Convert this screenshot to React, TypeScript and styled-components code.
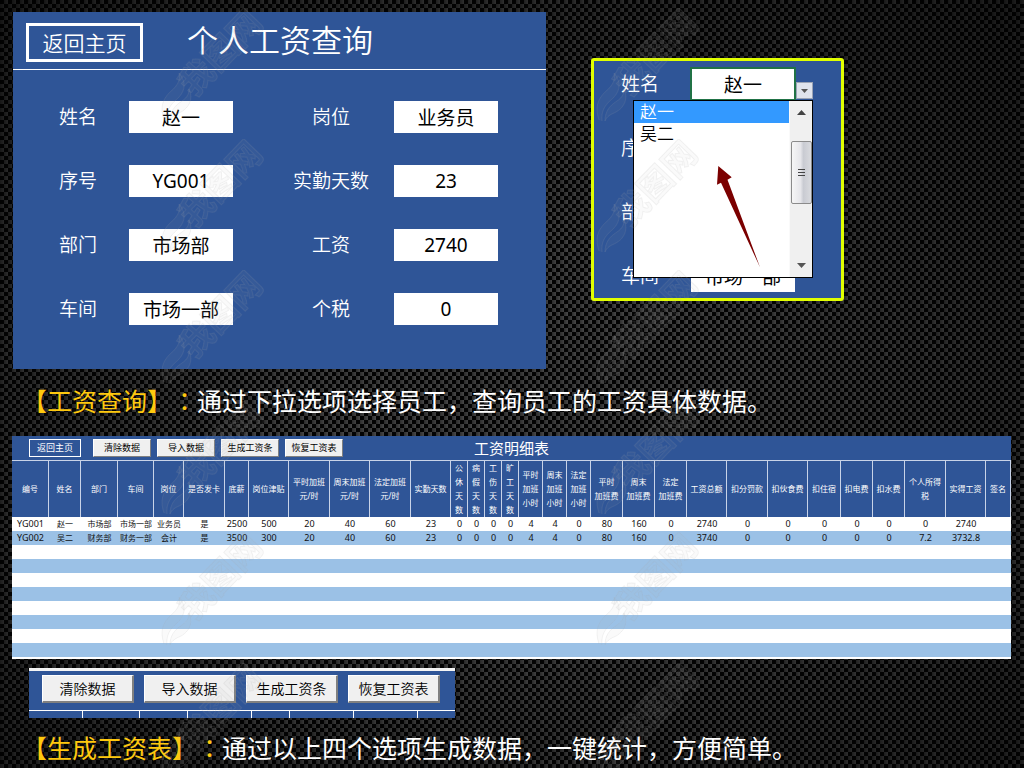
import React from "react";
import styled, { createGlobalStyle, css } from "styled-components";

const sans = `"Noto Sans", "Noto Sans CJK SC", sans-serif`;
const blue = "#2f5597";

const Global = createGlobalStyle`
  * { box-sizing: border-box; }
  body {
    margin: 0;
    background-color: #050505;
    background-image:
      radial-gradient(ellipse at 50% 55%, rgba(0,0,0,0) 30%, rgba(0,0,0,0.6) 100%),
      linear-gradient(90deg, rgba(0,0,0,0.35), rgba(0,0,0,0) 50%, rgba(0,0,0,0.35) 50%, rgba(0,0,0,0)),
      conic-gradient(#484848 25%, #040404 0 50%, #424242 0 75%, #040404 0);
    background-size: 100% 100%, 8px 8px, 8px 8px;
    font-family: ${sans};
  }
  button, input { font-family: inherit; }
`;

const Page = styled.main`
  position: relative;
  min-height: 100vh;
  padding: 12px 13px 0 12px;
  overflow: hidden;
`;

const TopRow = styled.div`
  display: grid;
  grid-template-columns: 533fr 253fr 122fr;
  column-gap: 45px;
  align-items: start;
  padding-left: 1px;
`;

const QueryPanel = styled.section`
  background: ${blue};
  color: #fff;
  padding-bottom: 44px;
`;

const QueryHeader = styled.header`
  display: flex;
  align-items: flex-start;
  gap: 44px;
  height: 58px;
  padding: 11px 13px 0;
  border-bottom: 1px solid #fff;
`;

const HomeButton = styled.button<{ $small?: boolean }>`
  background: transparent;
  color: #fff;
  white-space: nowrap;
  padding: 0;
  ${(p) =>
    p.$small
      ? css`
          width: 52px;
          height: 18px;
          border: 1px solid #fff;
          font-size: 9px;
          line-height: 14px;
          margin-right: 6px;
        `
      : css`
          width: 117px;
          height: 39px;
          border: 3px solid #fff;
          font-size: 21px;
          line-height: 30px;
          font-weight: 350;
        `}
`;

const QueryTitle = styled.h1`
  margin: 0;
  font-size: 31px;
  line-height: 34px;
  font-weight: 350;
  white-space: nowrap;
`;

const Fields = styled.div`
  display: grid;
  grid-template-columns: 102fr 104fr 35fr 126fr 104fr;
  row-gap: 32px;
  padding: 31px 48px 0 14px;
`;

const FieldLabel = styled.label<{ $column?: number }>`
  grid-column: ${(p) => p.$column ?? "auto"};
  color: #fff;
  font-size: 19px;
  line-height: 32px;
  font-weight: 350;
  text-align: center;
  white-space: nowrap;
`;

const FieldValue = styled.input<{ $active?: boolean }>`
  width: 100%;
  min-width: 0;
  height: 32px;
  padding: 0;
  border: 0;
  border-radius: 0;
  outline: ${(p) => (p.$active ? "2px solid #217346" : "none")};
  outline-offset: -1px;
  background: #fff;
  color: #000;
  font-size: 19px;
  text-align: center;
`;

const PickerPanel = styled.section`
  position: relative;
  margin-top: 46px;
  padding: 7px 44px 6px 22px;
  border: 3px solid #e1ff00;
  border-radius: 3px;
  background: ${blue};
`;

const PickerFields = styled.div`
  display: grid;
  grid-template-columns: 48px 104px;
  column-gap: 27px;
  row-gap: 32px;
`;

const DropButton = styled.button`
  position: absolute;
  left: 202px;
  top: 21px;
  width: 17px;
  height: 17px;
  padding: 0;
  display: grid;
  place-items: center;
  background: #dfe3ec;
  border: 1px solid #9aa3b5;
`;

const Menu = styled.div`
  position: absolute;
  left: 39px;
  top: 39px;
  width: 180px;
  height: 178px;
  display: flex;
  border: 1px solid #000;
  background: #fff;
`;

const Options = styled.ul`
  flex: 1;
  margin: 0;
  padding: 0;
  list-style: none;
`;

const Option = styled.li<{ $selected?: boolean }>`
  padding-left: 6px;
  font-size: 17px;
  line-height: 22px;
  font-weight: 350;
  background: ${(p) => (p.$selected ? "#3399ff" : "#fff")};
  color: ${(p) => (p.$selected ? "#fff" : "#000")};
`;

const ScrollTrack = styled.div`
  width: 23px;
  padding: 9px 1px;
  display: flex;
  flex-direction: column;
  align-items: center;
  justify-content: space-between;
  background: #f0f0f0;
  border-left: 1px solid #fafafa;
`;

const ScrollThumb = styled.div`
  width: 21px;
  height: 63px;
  margin-bottom: 34px;
  display: grid;
  place-items: center;
  border: 1px solid #8b8b8b;
  border-radius: 2px;
  background: linear-gradient(90deg, #f6f6f6, #e6e6ea 45%, #c9cbd2 60%, #d9dade);
`;

const Pointer = styled.svg`
  position: absolute;
  left: 122px;
  top: 104px;
`;

const Caption = styled.p`
  margin: 0;
  padding-left: 10px;
  color: #fff;
  font-size: 25px;
  line-height: 36px;
  white-space: nowrap;
  text-spacing-trim: space-all;
`;

const QueryCaption = styled(Caption)`
  margin-top: 13px;
`;

const CaptionName = styled.span`
  color: #ffc90e;
`;

const Colon = styled.span`
  font-family: "Noto Sans CJK TC", sans-serif;
`;

const Sheet = styled.section`
  margin: 17px 0 9px;
  padding-bottom: 2px;
  background: #fff;
`;

const SheetBar = styled.header`
  display: grid;
  grid-template-columns: 1fr auto 1fr;
  height: 25px;
  padding-left: 17px;
  background: ${blue};
  border-bottom: 1px solid #c8d3e8;
`;

const SheetActions = styled.div`
  display: flex;
  align-items: center;
  gap: 6px;
`;

const SheetTitle = styled.h2`
  margin: 0 17px 0 0;
  color: #fff;
  font-size: 15px;
  line-height: 24px;
  font-weight: 400;
`;

const ActionButton = styled.button<{ $large?: boolean }>`
  flex: none;
  width: ${(p) => (p.$large ? 92 : 58)}px;
  height: ${(p) => (p.$large ? 28 : 18)}px;
  padding: 0;
  border: 1px solid;
  border-color: #fff #808080 #808080 #fff;
  ${(p) => p.$large && css`border-right-width: 2px; border-bottom-width: 2px;`}
  background: #f0f0f0;
  color: #000;
  font-size: ${(p) => (p.$large ? 14 : 9)}px;
  font-weight: ${(p) => (p.$large ? 350 : 400)};
  line-height: ${(p) => (p.$large ? 24 : 14)}px;
  white-space: nowrap;
`;

const Table = styled.table`
  width: 100%;
  table-layout: fixed;
  border-collapse: separate;
  border-spacing: 0;
`;

const Th = styled.th`
  height: 56px;
  padding: 0;
  background: ${blue};
  border-right: 1px solid #c8d3e8;
  color: #fff;
  font-size: 8px;
  line-height: 14px;
  font-weight: 400;
  white-space: pre;
`;

const Row = styled.tr`
  background: #fff;
  &:nth-child(even) { background: #9bc1e6; }
`;

const Td = styled.td<{ $text?: boolean }>`
  height: 14px;
  padding: 0;
  color: #111;
  font-size: ${(p) => (p.$text ? 8 : 9)}px;
  line-height: 14px;
  text-align: center;
  white-space: nowrap;
`;

const Toolbar = styled.section`
  width: 426px;
  max-width: 100%;
  margin: 0 0 11px 17px;
  background: ${blue};
  border-top: 3px solid #f4f4f4;
`;

const ToolbarActions = styled.div`
  display: flex;
  gap: 10px;
  height: 40px;
  padding: 4px 13px 0;
  border-bottom: 1px solid #fff;
`;

const Ticks = styled.div`
  display: grid;
  grid-template-columns: 54px 57px 48px 64px 38px 64px 64px;
  height: 7px;
`;

const Tick = styled.span`
  border-right: 1px solid #fff;
`;

const Watermark = styled.svg`
  position: absolute;
  inset: 0;
  width: 100%;
  height: 100%;
  pointer-events: none;
`;

const fields = [
  ["姓名", "赵一", "岗位", "业务员"],
  ["序号", "YG001", "实勤天数", "23"],
  ["部门", "市场部", "工资", "2740"],
  ["车间", "市场一部", "个税", "0"],
];

const actions = ["清除数据", "导入数据", "生成工资条", "恢复工资表"];

const columns: [string, number][] = [
  ["编号", 37], ["姓名", 32], ["部门", 37], ["车间", 36], ["岗位", 30],
  ["是否发卡", 41], ["底薪", 24], ["岗位津贴", 40], ["平时加班\n元/时", 41],
  ["周末加班\n元/时", 40], ["法定加班\n元/时", 41], ["实勤天数", 40],
  ["公\n休\n天\n数", 17], ["病\n假\n天\n数", 17], ["工\n伤\n天\n数", 17], ["旷\n工\n天\n数", 17],
  ["平时\n加班\n小时", 24], ["周末\n加班\n小时", 24], ["法定\n加班\n小时", 24],
  ["平时\n加班费", 32], ["周末\n加班费", 32], ["法定\n加班费", 32],
  ["工资总额", 40], ["扣分罚款", 41], ["扣伙食费", 40], ["扣住宿", 33],
  ["扣电费", 32], ["扣水费", 32], ["个人所得\n税", 41], ["实得工资", 40], ["签名", 25],
];

const records = [
  "YG001 赵一 市场部 市场一部 业务员 是 2500 500 20 40 60 23 0 0 0 0 4 4 0 80 160 0 2740 0 0 0 0 0 0 2740".split(" "),
  "YG002 吴二 财务部 财务一部 会计 是 3500 300 20 40 60 23 0 0 0 0 4 4 0 80 160 0 3740 0 0 0 0 0 7.2 3732.8".split(" "),
];

export default function App() {
  return (
    <>
      <Global />
      <Page>
        <TopRow>
          <QueryPanel>
            <QueryHeader>
              <HomeButton type="button">返回主页</HomeButton>
              <QueryTitle>个人工资查询</QueryTitle>
            </QueryHeader>
            <Fields>
              {fields.map(([a, av, b, bv], i) => (
                <React.Fragment key={a}>
                  <FieldLabel htmlFor={`left-${i}`} $column={1}>{a}</FieldLabel>
                  <FieldValue id={`left-${i}`} defaultValue={av} />
                  <FieldLabel htmlFor={`right-${i}`} $column={4}>{b}</FieldLabel>
                  <FieldValue id={`right-${i}`} defaultValue={bv} />
                </React.Fragment>
              ))}
            </Fields>
          </QueryPanel>

          <PickerPanel>
            <PickerFields>
              {fields.map(([a, av], i) => (
                <React.Fragment key={a}>
                  <FieldLabel htmlFor={`pick-${i}`}>{a}</FieldLabel>
                  <FieldValue id={`pick-${i}`} defaultValue={av} $active={i === 0} />
                </React.Fragment>
              ))}
            </PickerFields>
            <DropButton type="button" aria-label="展开姓名列表">
              <svg width="7" height="4" viewBox="0 0 7 4"><path d="M0 0h7L3.500 4z" fill="#555" /></svg>
            </DropButton>
            <Menu>
              <Options role="listbox" aria-label="姓名">
                <Option role="option" aria-selected $selected>赵一</Option>
                <Option role="option" aria-selected={false}>吴二</Option>
              </Options>
              <ScrollTrack>
                <svg width="9" height="5" viewBox="0 0 9 5"><path d="M0 5h9L4.500 0z" fill="#444" /></svg>
                <ScrollThumb>
                  <svg width="7" height="9" viewBox="0 0 7 9"><path d="M0 1.500h7M0 4.500h7M0 7.500h7" stroke="#444" fill="none" /></svg>
                </ScrollThumb>
                <svg width="9" height="5" viewBox="0 0 9 5"><path d="M0 0h9L4.500 5z" fill="#555" /></svg>
              </ScrollTrack>
            </Menu>
            <Pointer width="46" height="104" viewBox="0 0 46 104">
              <path d="M2.300 1 15.700 12.300 11.500 14.700 44 102.300 5 17.700 1 19.700z" fill="#7b0000" />
            </Pointer>
          </PickerPanel>
        </TopRow>

        <QueryCaption>
          <CaptionName>【工资查询】<Colon>：</Colon></CaptionName>通过下拉选项选择员工，查询员工的工资具体数据。
        </QueryCaption>

        <Sheet>
          <SheetBar>
            <SheetActions>
              <HomeButton type="button" $small>返回主页</HomeButton>
              {actions.map((name) => (
                <ActionButton type="button" key={name}>{name}</ActionButton>
              ))}
            </SheetActions>
            <SheetTitle>工资明细表</SheetTitle>
          </SheetBar>
          <Table>
            <colgroup>
              {columns.map(([, width], i) => (
                <col key={i} width={width} />
              ))}
            </colgroup>
            <thead>
              <tr>{columns.map(([name], i) => <Th key={i} scope="col">{name}</Th>)}</tr>
            </thead>
            <tbody>
              {Array.from({ length: 10 }, (_, r) => (
                <Row key={r}>
                  {columns.map((_c, i) => (
                    <Td key={i} $text={i > 0 && i < 6}>{records[r]?.[i]}</Td>
                  ))}
                </Row>
              ))}
            </tbody>
          </Table>
        </Sheet>

        <Toolbar>
          <ToolbarActions>
            {actions.map((name) => (
              <ActionButton type="button" key={name} $large>{name}</ActionButton>
            ))}
          </ToolbarActions>
          <Ticks>
            {Array.from({ length: 7 }, (_, i) => <Tick key={i} />)}
          </Ticks>
        </Toolbar>

        <Caption>
          <CaptionName>【生成工资表】<Colon>：</Colon></CaptionName>通过以上四个选项生成数据，一键统计，方便简单。
        </Caption>

        <Watermark aria-hidden="true">
          <defs>
            <pattern id="mark" x="160" y="8" width="435" height="131" patternUnits="userSpaceOnUse">
              <g fill="#a0a0a0" fillOpacity="0.06" stroke="#a0a0a0" strokeOpacity="0.13">
                <path d="M4 112C0 100 2 92 10 84 20 76 20 70 19 65 27 74 25 84 17 91 10 97 6 103 7 113M10 113C10 104 14 98 22 93 28 89 29 85 29 81 34 92 28 101 19 105 14 107 11 110 10 113" />
                <text transform="translate(34 90) rotate(-46)" fontSize="34" fontWeight="700" fontFamily="'Noto Sans CJK SC', sans-serif">我图网</text>
              </g>
            </pattern>
          </defs>
          <rect width="100%" height="100%" fill="url(#mark)" />
        </Watermark>
      </Page>
    </>
  );
}
